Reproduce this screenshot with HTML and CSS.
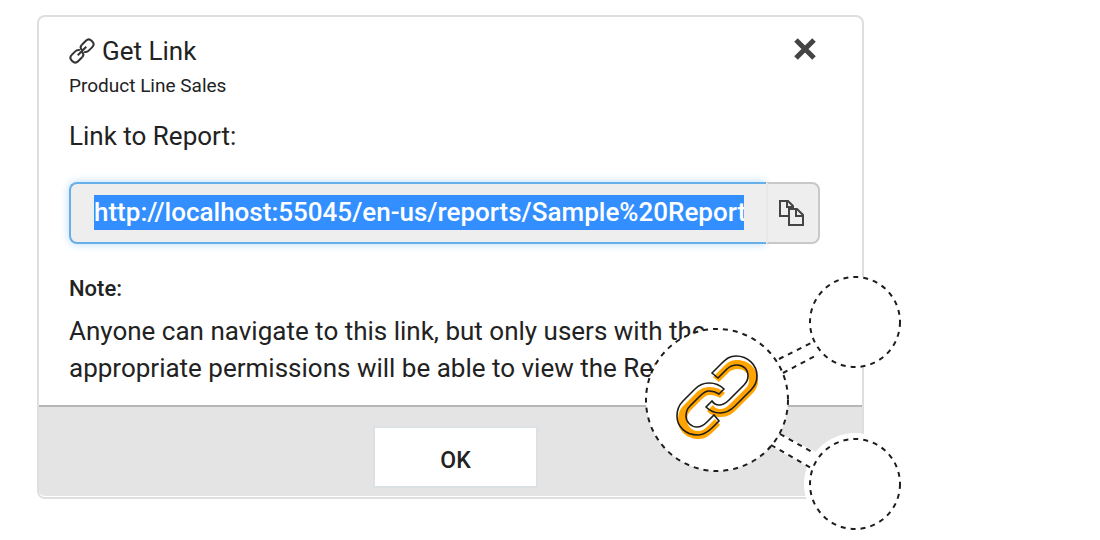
FILE: index.html
```html
<!DOCTYPE html>
<html lang="en">
<head>
<meta charset="utf-8">
<title>Get Link</title>
<link rel="stylesheet" href="styles.css">
</head>
<body>
<main class="dialog" role="dialog" aria-labelledby="dialog-title">
  <div class="dialog-body">
    <header class="dialog-header">
      <div>
        <h1 class="title" id="dialog-title">
          <svg class="title-icon" viewBox="0 0 26 26" aria-hidden="true">
            <g transform="rotate(-45 13 13)">
              <path d="M9 17.500H3Q-1 17.500 -1 13.500V12.500Q-1 8.500 3 8.500H8Q11 8.500 12 11M17 8.500H23Q27 8.500 27 12.500V13.500Q27 17.500 23 17.500H18Q15 17.500 14 15"/>
              <path d="M9 17.500Q12 17.500 12.500 14M17 8.500Q14 8.500 13.500 12M7 13h12"/>
            </g>
          </svg>
          Get Link
        </h1>
        <p class="subtitle">Product Line Sales</p>
      </div>
      <button class="close" type="button" aria-label="Close">
        <svg viewBox="0 0 24 24" aria-hidden="true"><path d="M3 3l18 18M21 3L3 21"/></svg>
      </button>
    </header>
    <label class="link-label" for="report-link">Link to Report:</label>
    <div class="link-row">
      <input class="link-input" id="report-link" type="text" readonly value="http://localhost:55045/en-us/reports/Sample%20Reports">
      <button class="copy" type="button" aria-label="Copy link">
        <svg viewBox="0 0 26 28" aria-hidden="true">
          <path d="M10 17H2V2h8l5 5v3M9 2v6h6"/>
          <path d="M11 10h8l6 6v10H11zM18 10v7h7"/>
        </svg>
      </button>
    </div>
    <h2 class="note-title">Note:</h2>
    <p class="note">Anyone can navigate to this link, but only users with the<br>appropriate permissions will be able to view the Report.</p>
  </div>
  <footer class="dialog-footer">
    <button class="ok" type="button">OK</button>
  </footer>
  <svg class="share-art" viewBox="640 270 270 265" aria-hidden="true">
    <g class="halo">
      <circle cx="717" cy="399" r="71"/>
      <circle cx="855" cy="321" r="46"/>
      <circle cx="855" cy="483" r="51"/>
      <path d="M781 433L816 451L810 467L771 445z"/>
    </g>
    <g class="dashes">
      <circle cx="717" cy="399" r="71"/>
      <circle cx="855" cy="321" r="45"/>
      <circle cx="855" cy="483" r="45"/>
      <path d="M779 358L813 341M783 372L817 354M780 433L814 452M771 444L811 467"/>
    </g>
    <defs>
      <g id="chain">
        <path d="M712 372L721 363C727 357 730 355 736 355C748 355 757 364 757 375C757 381 755 385 751 389L735 405C731 409 727 412 720 412C714 412 710 410 706 406L712 400C714 403 716 404 719 404C723 404 726 402 729 399L744 384C747 381 748 379 748 375C748 368 743 364 737 364C733 364 730 365 727 368L718 377z"/>
        <path d="M724 388L719 393C716 391 713 390 709 390C705 390 703 392 700 395L690 405C687 408 686 411 686 415C686 421 691 426 697 426C701 426 704 424 707 421L714 414L719 420L713 426C708 431 704 434 698 434C686 434 677 426 677 415C677 408 679 404 683 400L695 388C699 384 703 382 709 382C715 382 720 384 724 388z"/>
      </g>
    </defs>
    <use class="chain-fill" href="#chain" x="1" y="4"/>
    <use class="chain-line" href="#chain"/>
  </svg>
</main>
</body>
</html>
```
FILE: styles.css
```css
* { box-sizing: border-box; }

body {
  min-height: 100vh;
  margin: 0;
  padding: 15px 37px 42px;
  background: #fff;
  color: #222;
  font-family: Roboto, "Liberation Sans", sans-serif;
  font-size: 26px;
}

h1, h2, p { margin: 0; font-weight: 400; }

button { font: inherit; color: inherit; cursor: pointer; }

.dialog {
  position: relative;
  max-width: 827px;
  border: 2px solid #dedede;
  border-radius: 8px;
}

.dialog-body { padding: 18px 42px 18px 30px; }

.dialog-header {
  display: flex;
  justify-content: space-between;
  align-items: flex-start;
}

.title {
  display: flex;
  align-items: center;
  gap: 7px;
  font-size: 26px;
  line-height: 32px;
}

.title-icon {
  width: 26px;
  height: 26px;
  fill: none;
  stroke: #333;
  stroke-width: 2;
}

.subtitle { font-size: 19px; line-height: 37px; }

.close {
  width: 28px;
  height: 28px;
  padding: 0 1px;
  border: 0;
  background: none;
}

.close svg {
  display: block;
  width: 24px;
  height: 24px;
  stroke: #444;
  stroke-width: 5;
}

.link-label {
  display: block;
  padding: 16px 0 30px;
  line-height: 32px;
}

.link-row { display: flex; height: 62px; }

.link-input {
  flex: 1;
  min-width: 0;
  padding: 11px 22px 12px 23px;
  border: 2px solid #66afe9;
  border-right: 0;
  border-radius: 8px 0 0 8px;
  outline: 0;
  background: linear-gradient(#338fff, #338fff) content-box, #eee;
  box-shadow: 0 0 10px #b9dcf8;
  color: #fff;
  font: 500 26px/35px Roboto, "Liberation Sans", sans-serif;
}

.copy {
  display: grid;
  place-items: center start;
  width: 54px;
  padding: 0 0 0 10px;
  border: 2px solid #c8c8c8;
  border-left-color: #e8e8e8;
  border-radius: 0 8px 8px 0;
  background: #eee;
  z-index: 1;
}

.copy svg {
  width: 26px;
  height: 28px;
  fill: none;
  stroke: #444;
  stroke-width: 2;
}

.note-title {
  padding: 29px 0 8px;
  font-size: 22px;
  font-weight: 500;
  line-height: 32px;
}

.note { line-height: 37px; }

.dialog-footer {
  display: flex;
  justify-content: center;
  padding: 19px 0 8px 10px;
  border-top: 2px solid #b5b7b6;
  border-bottom: 1px solid #fff;
  border-radius: 0 0 6px 6px;
  background: #e4e4e4;
}

.ok {
  width: 165px;
  height: 62px;
  padding: 6px 0 0;
  border: 2px solid #dce1e4;
  background: #fff;
  font-size: 23px;
  font-weight: 500;
}

/* Decorative nodes that hang over the dialog's lower right corner */
.share-art {
  position: absolute;
  right: -48px;
  bottom: -39px;
  width: 270px;
  height: 265px;
  z-index: 2;
  pointer-events: none;
}

.halo { fill: #fff; }
.dashes { fill: none; stroke: #1d1d1b; stroke-width: 2; stroke-dasharray: 5 5; }
.chain-fill { fill: #ffa400; }
.chain-line { fill: none; stroke: #1d1d1b; stroke-width: 1.6; }
```
